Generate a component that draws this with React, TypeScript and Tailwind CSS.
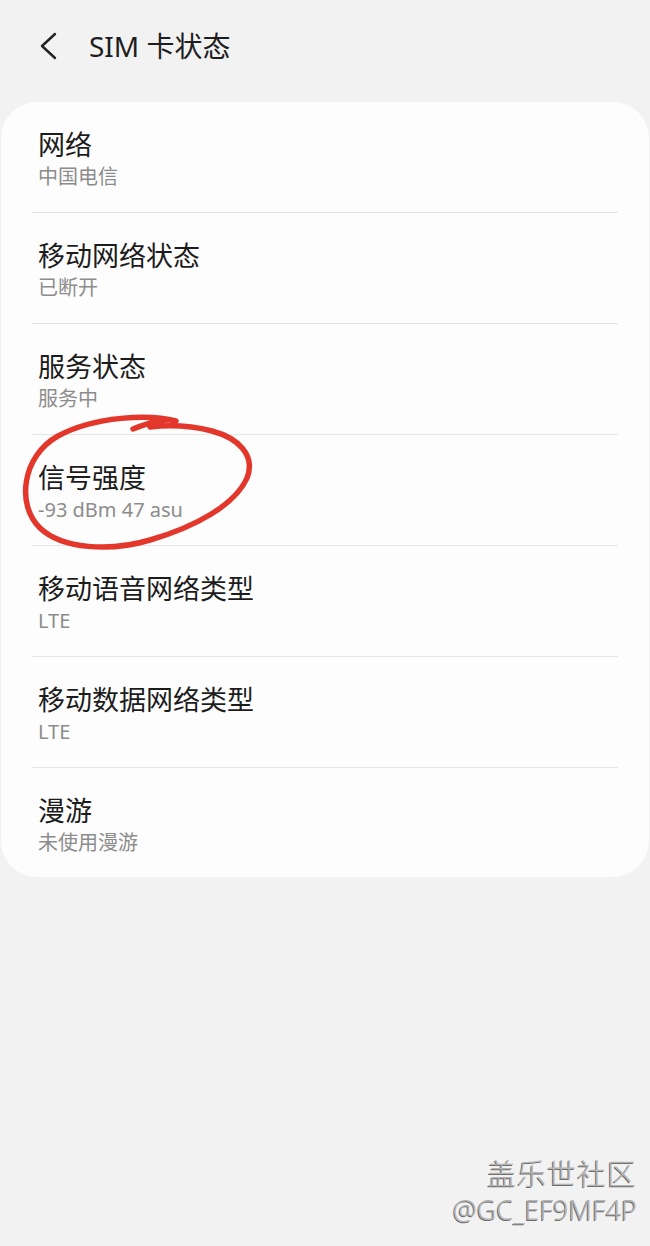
import { FC } from "react";

type StatusRow = { title: string; value: string };

const rows: StatusRow[] = [
  { title: "网络", value: "中国电信" },
  { title: "移动网络状态", value: "已断开" },
  { title: "服务状态", value: "服务中" },
  { title: "信号强度", value: "-93 dBm 47 asu" },
  { title: "移动语音网络类型", value: "LTE" },
  { title: "移动数据网络类型", value: "LTE" },
  { title: "漫游", value: "未使用漫游" },
];

const font = "font-['Noto_Sans','Noto_Sans_CJK_SC',sans-serif]";

const Row: FC<StatusRow & { last: boolean }> = ({ title, value, last }) => (
  <div className={last ? "h-[109px]" : "h-[111px] border-b border-[#e6e6e6]"}>
    <div className="px-[6px] pt-[26px]">
      <div className="text-[27px] leading-[34px] text-[#1c1c1c]">{title}</div>
      <div className="mt-[2px] text-[20px] leading-[26px] text-[#8c8c8c]">{value}</div>
    </div>
  </div>
);

export default function App() {
  return (
    <div className={`relative flex min-h-[1246px] w-[650px] flex-col bg-[#f2f2f2] ${font}`}>
      <header className="flex h-[92px] items-center">
        <svg width="24" height="30" viewBox="0 0 24 30" className="ml-[37px]" fill="none">
          <path d="M18 3 L5 15 L18 27" stroke="#222" strokeWidth="2.4" strokeLinecap="round" strokeLinejoin="round" />
        </svg>
        <h1 className="ml-[28px] text-[28px] leading-none text-[#1e1e1e]">SIM 卡状态</h1>
      </header>

      <section className="mx-[1px] mt-[10px] rounded-[36px] bg-[#fdfdfd] px-[31px]">
        {rows.map((row, index) => (
          <Row key={row.title} {...row} last={index === rows.length - 1} />
        ))}
      </section>

      <div className="mt-auto pb-[20px] pr-[13px] text-right font-light text-[#b4b4b4] [text-shadow:-1px_1px_0_#6e6e6e]">
        <div className="text-[29px] leading-[36px] tracking-[1px]">盖乐世社区</div>
        <div className="mt-[2px] text-[27px] leading-[32px]">@GC_EF9MF4P</div>
      </div>

      {/* hand-drawn mark over the signal row */}
      <svg
        className="pointer-events-none absolute left-0 top-0"
        width="650"
        height="1246"
        viewBox="0 0 650 1246"
        fill="none"
      >
        <path
          d="M133 429 C150 422 168 418 176 421 C150 414 95 416 58 436 C22 456 16 505 40 528 C62 549 110 552 150 540 C195 527 235 505 247 478 C256 455 238 438 212 431 C192 426 168 425 150 427"
          stroke="#e3372c"
          strokeWidth="5.5"
          strokeLinecap="round"
          strokeLinejoin="round"
        />
      </svg>
    </div>
  );
}
